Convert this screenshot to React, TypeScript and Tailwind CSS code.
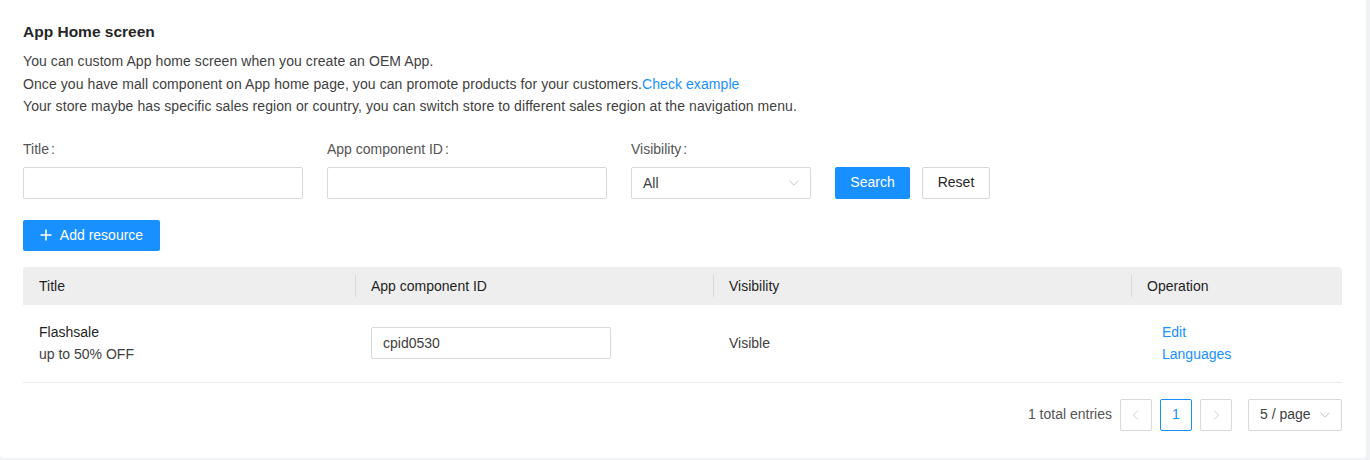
import { useState } from 'react';

// Chevron fino, como el de los selects de la referencia
const Chevron = ({ dir = 'down', className = '' }: { dir?: 'down' | 'left' | 'right'; className?: string }) => {
    const d =
        dir === 'down' ? 'M2 4.5l5 5 5-5' : dir === 'left' ? 'M9 2L4 7l5 5' : 'M5 2l5 5-5 5';
    return (
        <svg className={className} viewBox="0 0 14 14" fill="none" stroke="currentColor" strokeWidth={1} strokeLinecap="round" strokeLinejoin="round">
            <path d={d} />
        </svg>
    );
};

interface Row {
    title: string;
    subtitle: string;
    componentId: string;
    visibility: string;
}

const rows: Row[] = [
    { title: 'Flashsale', subtitle: 'up to 50% OFF', componentId: 'cpid0530', visibility: 'Visible' },
];

const Field = ({ label, children, width }: { label: string; children: React.ReactNode; width: string }) => (
    <div className={`flex flex-col ${width}`}>
        <label className="text-[14px] leading-[22px] text-[#555]">
            {label}
            <span className="ml-[2px]">:</span>
        </label>
        <div className="mt-[7px]">{children}</div>
    </div>
);

export default function App() {
    const [title, setTitle] = useState('');
    const [componentId, setComponentId] = useState('');

    return (
        <div className="min-h-[460px] bg-[#f0f2f5] pr-[4px] pb-[2px]" style={{ fontFamily: '"Liberation Sans", Arial, sans-serif' }}>
            <div className="h-[458px] bg-white rounded-b-[4px] px-[23px] pt-[20px]">
                <h2 className="text-[15.5px] leading-[24px] font-bold text-[#262626]">App Home screen</h2>

                <div className="mt-[6px] text-[14px] leading-[22.5px] tracking-[0.08px] text-[#3f3f3f]">
                    <p>You can custom App home screen when you create an OEM App.</p>
                    <p>
                        Once you have mall component on App home page, you can promote products for your customers.
                        <a className="text-[#1890ff] cursor-pointer">Check example</a>
                    </p>
                    <p>Your store maybe has specific sales region or country, you can switch store to different sales region at the navigation menu.</p>
                </div>

                {/* Filtros */}
                <div className="mt-[20px] flex items-end">
                    <Field label="Title" width="w-[280px]">
                        <input
                            value={title}
                            onChange={(e) => setTitle(e.target.value)}
                            className="w-full h-[32px] border border-[#d9d9d9] rounded-[2px] px-[11px] text-[14px] outline-none"
                        />
                    </Field>
                    <div className="ml-[24px]">
                        <Field label="App component ID" width="w-[280px]">
                            <input
                                value={componentId}
                                onChange={(e) => setComponentId(e.target.value)}
                                className="w-full h-[32px] border border-[#d9d9d9] rounded-[2px] px-[11px] text-[14px] outline-none"
                            />
                        </Field>
                    </div>
                    <div className="ml-[24px]">
                        <Field label="Visibility" width="w-[180px]">
                            <div className="h-[32px] border border-[#d9d9d9] rounded-[2px] pl-[11px] pr-[10px] flex items-center justify-between text-[14px] text-[#404040]">
                                <span className="mt-[1px]">All</span>
                                <Chevron className="w-[12px] h-[12px] text-[#bfbfbf]" />
                            </div>
                        </Field>
                    </div>
                    <button className="ml-[24px] h-[32px] w-[75px] rounded-[2px] bg-[#1890ff] text-white text-[14px]">Search</button>
                    <button className="ml-[12px] h-[32px] w-[68px] rounded-[2px] border border-[#d9d9d9] bg-white text-[#262626] text-[14px]">Reset</button>
                </div>

                <button className="mt-[21px] h-[31px] w-[137px] rounded-[2px] bg-[#1890ff] text-white text-[14px] flex items-center justify-center gap-[8px]">
                    <svg className="w-[12px] h-[12px]" viewBox="0 0 12 12" fill="none" stroke="currentColor" strokeWidth={1.6}>
                        <path d="M6 0.5v11M0.5 6h11" />
                    </svg>
                    Add resource
                </button>

                {/* Tabla */}
                <div className="mt-[16px] w-[1319px] text-[14px]">
                    <div className="grid grid-cols-[332px_358px_418px_211px] h-[38px] bg-[#eeeeee] rounded-t-[4px] text-[#1f1f1f] font-medium">
                        {['Title', 'App component ID', 'Visibility', 'Operation'].map((h, i) => (
                            <div key={h} className="flex items-center">
                                {i > 0 && <div className="w-px h-[22px] bg-[#d9d9d9]" />}
                                <span className={i > 0 ? 'pl-[15px] mt-[1px]' : 'pl-[16px] mt-[1px]'}>{h}</span>
                            </div>
                        ))}
                    </div>
                    {rows.map((r) => (
                        <div key={r.componentId} className="grid grid-cols-[332px_358px_418px_211px] h-[78px] border-b border-[#ebebeb] items-center leading-[22.5px]">
                            <div className="px-[16px]">
                                <div className="text-[#1f1f1f] font-medium">{r.title}</div>
                                <div className="text-[#404040]">{r.subtitle}</div>
                            </div>
                            <div className="px-[16px]">
                                <input
                                    defaultValue={r.componentId}
                                    className="w-[240px] h-[32px] border border-[#d9d9d9] rounded-[2px] px-[11px] text-[14px] text-[#404040] outline-none"
                                />
                            </div>
                            <div className="px-[16px] text-[#404040]">{r.visibility}</div>
                            <div className="px-[31px] text-[#1890ff] flex flex-col">
                                <a className="cursor-pointer">Edit</a>
                                <a className="cursor-pointer">Languages</a>
                            </div>
                        </div>
                    ))}

                    {/* Paginación */}
                    <div className="mt-[16px] flex items-center justify-end h-[32px] text-[#555]">
                        <span className="mr-[8px]">1 total entries</span>
                        <button className="w-[32px] h-[32px] border border-[#d9d9d9] rounded-[2px] flex items-center justify-center text-[#c8c8c8]">
                            <Chevron dir="left" className="w-[12px] h-[12px]" />
                        </button>
                        <button className="ml-[8px] w-[32px] h-[32px] border border-[#1890ff] rounded-[2px] text-[#1890ff]">1</button>
                        <button className="ml-[8px] w-[32px] h-[32px] border border-[#d9d9d9] rounded-[2px] flex items-center justify-center text-[#c8c8c8]">
                            <Chevron dir="right" className="w-[12px] h-[12px]" />
                        </button>
                        <div className="ml-[16px] w-[94px] h-[32px] border border-[#d9d9d9] rounded-[2px] flex items-center justify-between pl-[11px] pr-[10px] text-[#404040]">
                            <span>5 / page</span>
                            <Chevron className="w-[12px] h-[12px] text-[#bfbfbf]" />
                        </div>
                    </div>
                </div>
            </div>
        </div>
    );
}
